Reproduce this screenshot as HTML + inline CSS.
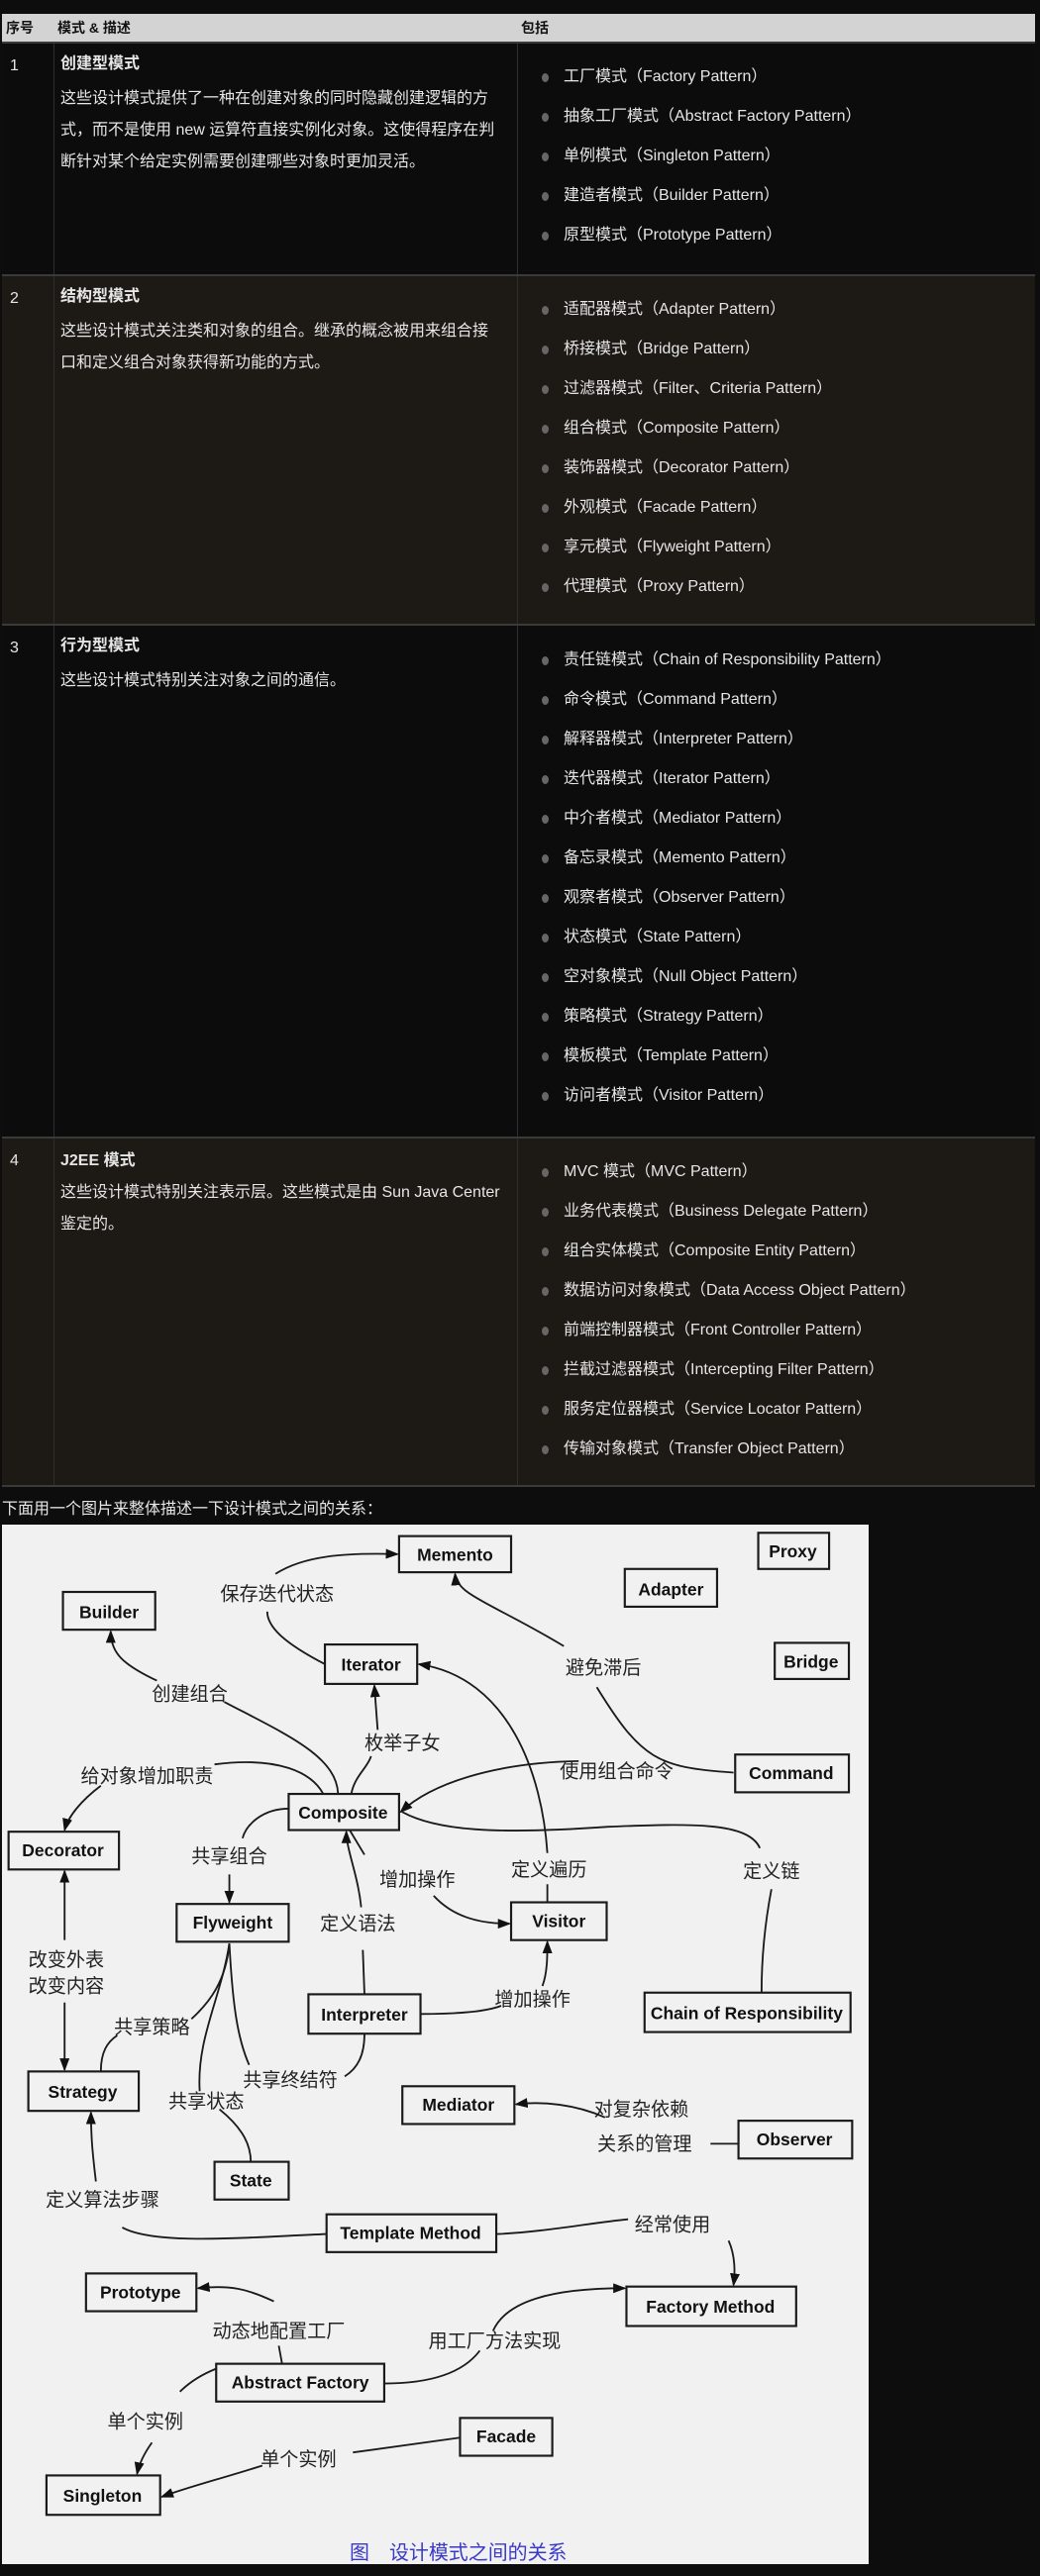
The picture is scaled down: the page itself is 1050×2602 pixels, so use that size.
<!DOCTYPE html>
<html><head><meta charset="utf-8"><style>
*{margin:0;padding:0;box-sizing:border-box}
body{width:1050px;height:2602px;background:#0d0d0d;position:relative;overflow:hidden;font-family:"Liberation Sans","Noto Sans CJK SC",sans-serif;color:#e6e6e6}
.a{position:absolute;white-space:nowrap}
.hdr{position:absolute;left:2px;top:14px;width:1043px;height:28px;background:#d3d3d3}
.h{position:absolute;top:20px;font-size:14px;font-weight:bold;color:#111;line-height:16px}
.row{position:absolute;left:2px;width:1043px;border-top:2px solid #3a3a3a}
.vl{position:absolute;top:0;bottom:0;width:1px;background:#2e2e2e}
.t{font-size:16px;font-weight:bold;line-height:20px}
.d{font-size:16px;line-height:32px}
.li{font-size:16px;line-height:20px}
.b{position:absolute;width:7px;height:9px;border-radius:50%;background:#666}
svg text{font-family:"Liberation Sans","Noto Sans CJK SC",sans-serif}
</style></head><body>
<div class="hdr"></div>
<div class="h a" style="left:6px">序号</div>
<div class="h a" style="left:58px">模式 &amp; 描述</div>
<div class="h a" style="left:526px">包括</div>

<div class="row" style="top:42px;height:235px;background:#0c0c0c"><div class="vl" style="left:52px"></div><div class="vl" style="left:520px"></div></div>
<div class="row" style="top:277px;height:353px;background:#1d1a16"><div class="vl" style="left:52px"></div><div class="vl" style="left:520px"></div></div>
<div class="row" style="top:630px;height:518px;background:#0c0c0c"><div class="vl" style="left:52px"></div><div class="vl" style="left:520px"></div></div>
<div class="row" style="top:1148px;height:354px;background:#1d1a16;border-bottom:2px solid #3a3a3a"><div class="vl" style="left:52px"></div><div class="vl" style="left:520px"></div></div>

<div class="a d" style="left:10px;top:51px">1</div>
<div class="a t" style="left:61px;top:55px">创建型模式</div>
<div class="a d" style="left:61px;top:84px">这些设计模式提供了一种在创建对象的同时隐藏创建逻辑的方<br>式，而不是使用 new 运算符直接实例化对象。这使得程序在判<br>断针对某个给定实例需要创建哪些对象时更加灵活。</div>
<div class="a d" style="left:10px;top:286px">2</div>
<div class="a t" style="left:61px;top:290px">结构型模式</div>
<div class="a d" style="left:61px;top:319px">这些设计模式关注类和对象的组合。继承的概念被用来组合接<br>口和定义组合对象获得新功能的方式。</div>
<div class="a d" style="left:10px;top:639px">3</div>
<div class="a t" style="left:61px;top:643px">行为型模式</div>
<div class="a d" style="left:61px;top:672px">这些设计模式特别关注对象之间的通信。</div>
<div class="a d" style="left:10px;top:1157px">4</div>
<div class="a t" style="left:61px;top:1163px">J2EE 模式</div>
<div class="a d" style="left:61px;top:1189px">这些设计模式特别关注表示层。这些模式是由 Sun Java Center<br>鉴定的。</div>

<div id="items"></div>
<script>
var groups=[[78,["工厂模式（Factory Pattern）","抽象工厂模式（Abstract Factory Pattern）","单例模式（Singleton Pattern）","建造者模式（Builder Pattern）","原型模式（Prototype Pattern）"]],
[313,["适配器模式（Adapter Pattern）","桥接模式（Bridge Pattern）","过滤器模式（Filter、Criteria Pattern）","组合模式（Composite Pattern）","装饰器模式（Decorator Pattern）","外观模式（Facade Pattern）","享元模式（Flyweight Pattern）","代理模式（Proxy Pattern）"]],
[667,["责任链模式（Chain of Responsibility Pattern）","命令模式（Command Pattern）","解释器模式（Interpreter Pattern）","迭代器模式（Iterator Pattern）","中介者模式（Mediator Pattern）","备忘录模式（Memento Pattern）","观察者模式（Observer Pattern）","状态模式（State Pattern）","空对象模式（Null Object Pattern）","策略模式（Strategy Pattern）","模板模式（Template Pattern）","访问者模式（Visitor Pattern）"]],
[1184,["MVC 模式（MVC Pattern）","业务代表模式（Business Delegate Pattern）","组合实体模式（Composite Entity Pattern）","数据访问对象模式（Data Access Object Pattern）","前端控制器模式（Front Controller Pattern）","拦截过滤器模式（Intercepting Filter Pattern）","服务定位器模式（Service Locator Pattern）","传输对象模式（Transfer Object Pattern）"]]];
var h="";groups.forEach(function(g){g[1].forEach(function(s,i){var y=g[0]+40*i;h+='<div class="b" style="left:547px;top:'+(y-4)+'px"></div><div class="a li" style="left:569px;top:'+(y-10)+'px">'+s+'</div>';});});
document.getElementById("items").innerHTML=h;
</script>

<div class="a" style="left:2px;top:1515px;font-size:16px;line-height:20px">下面用一个图片来整体描述一下设计模式之间的关系：</div>

<svg style="position:absolute;left:2px;top:1540px" width="875" height="1050" viewBox="2 927 526 633" preserveAspectRatio="none">
<defs><marker id="ar" markerWidth="8" markerHeight="6" refX="7" refY="3" orient="auto" markerUnits="userSpaceOnUse"><path d="M0,0 L8,3 L0,6 z" fill="#111"/></marker></defs>
<rect x="2" y="927" width="526" height="633" fill="#f1f1f1"/>
<g fill="none" stroke="#1a1a1a" stroke-width="1.3">
<rect x="243" y="934" width="68" height="22"/>
<rect x="461" y="932" width="43" height="22"/>
<rect x="380" y="954" width="56" height="23"/>
<rect x="39" y="968" width="56" height="23"/>
<rect x="471" y="999" width="45" height="22"/>
<rect x="198" y="1000" width="56" height="24"/>
<rect x="447" y="1067" width="69" height="23"/>
<rect x="176" y="1091" width="67" height="22"/>
<rect x="6" y="1114" width="67" height="23"/>
<rect x="108" y="1158" width="68" height="23"/>
<rect x="311" y="1157" width="58" height="23"/>
<rect x="188" y="1213" width="68" height="24"/>
<rect x="392" y="1212" width="125" height="24"/>
<rect x="18" y="1260" width="67" height="24"/>
<rect x="245" y="1269" width="68" height="23"/>
<rect x="449" y="1290" width="69" height="23"/>
<rect x="131" y="1315" width="45" height="23"/>
<rect x="199" y="1347" width="103" height="23"/>
<rect x="53" y="1383" width="67" height="23"/>
<rect x="381" y="1391" width="103" height="24"/>
<rect x="132" y="1438" width="102" height="23"/>
<rect x="280" y="1471" width="56" height="23"/>
<rect x="29" y="1506" width="69" height="24"/>
</g>
<g font-size="10.5" font-weight="bold" text-anchor="middle" fill="#111">
<text x="277" y="949">Memento</text><text x="482" y="947">Proxy</text><text x="408" y="970">Adapter</text>
<text x="67" y="984">Builder</text><text x="493" y="1014">Bridge</text><text x="226" y="1016">Iterator</text>
<text x="481" y="1082">Command</text><text x="209" y="1106">Composite</text><text x="39" y="1129">Decorator</text>
<text x="142" y="1173">Flyweight</text><text x="340" y="1172">Visitor</text><text x="222" y="1229">Interpreter</text>
<text x="454" y="1228">Chain of Responsibility</text><text x="51" y="1276">Strategy</text><text x="279" y="1284">Mediator</text>
<text x="483" y="1305">Observer</text><text x="153" y="1330">State</text><text x="250" y="1362">Template Method</text>
<text x="86" y="1398">Prototype</text><text x="432" y="1407">Factory Method</text><text x="183" y="1453">Abstract Factory</text>
<text x="308" y="1486">Facade</text><text x="63" y="1522">Singleton</text>
</g>
<g font-size="11.5" text-anchor="middle" fill="#222">
<text x="169" y="973">保存迭代状态</text><text x="116" y="1034">创建组合</text><text x="245" y="1064">枚举子女</text>
<text x="367" y="1018">避免滞后</text><text x="90" y="1084">给对象增加职责</text><text x="375" y="1081">使用组合命令</text>
<text x="140" y="1133">共享组合</text><text x="254" y="1147">增加操作</text><text x="334" y="1141">定义遍历</text>
<text x="469" y="1142">定义链</text><text x="218" y="1174">定义语法</text><text x="41" y="1196">改变外表</text>
<text x="41" y="1212">改变内容</text><text x="324" y="1220">增加操作</text><text x="93" y="1237">共享策略</text>
<text x="177" y="1269">共享终结符</text><text x="126" y="1282">共享状态</text><text x="390" y="1287" font-family="Liberation Serif,Noto Serif CJK SC,serif">对复杂依赖</text>
<text x="392" y="1308" font-family="Liberation Serif,Noto Serif CJK SC,serif">关系的管理</text><text x="63" y="1342">定义算法步骤</text><text x="409" y="1357" font-family="Liberation Serif,Noto Serif CJK SC,serif">经常使用</text>
<text x="170" y="1422">动态地配置工厂</text><text x="301" y="1428">用工厂方法实现</text><text x="89" y="1477">单个实例</text>
<text x="182" y="1500">单个实例</text>
</g>
<text x="279" y="1557" font-size="12" text-anchor="middle" fill="#3a3ac8">图　设计模式之间的关系</text>
<g fill="none" stroke="#1a1a1a" stroke-width="1.1">
<path d="M168,957 C185,946 210,944 242,945" marker-end="url(#ar)"/>
<path d="M198,1012 C175,1000 163,990 163,980"/>
<path d="M343,1001 C300,975 278,970 277,957" marker-end="url(#ar)"/>
<path d="M363,1026 C390,1070 400,1075 446,1078"/>
<path d="M96,1022 C75,1012 68,1005 68,992" marker-end="url(#ar)"/>
<path d="M137,1035 C175,1055 205,1068 206,1091"/>
<path d="M214,1091 C216,1080 224,1075 226,1068"/>
<path d="M230,1052 L228,1025" marker-end="url(#ar)"/>
<path d="M333,1157 L333,1146"/>
<path d="M333,1127 C330,1080 310,1020 255,1012" marker-end="url(#ar)"/>
<path d="M352,1071 C300,1072 262,1085 244,1102" marker-end="url(#ar)"/>
<path d="M462,1124 C455,1108 420,1109 370,1111 C300,1116 265,1113 245,1102"/>
<path d="M469,1149 C465,1170 463,1190 463,1212"/>
<path d="M131,1073 C170,1068 190,1078 197,1091"/>
<path d="M62,1086 C50,1095 42,1105 40,1113" marker-end="url(#ar)"/>
<path d="M176,1100 C160,1100 150,1110 148,1118"/>
<path d="M140,1140 L140,1157" marker-end="url(#ar)"/>
<path d="M213,1113 L222,1128"/>
<path d="M264,1153 C275,1165 290,1170 310,1170" marker-end="url(#ar)"/>
<path d="M222,1213 L221,1186"/>
<path d="M220,1160 C218,1140 211,1125 211,1114" marker-end="url(#ar)"/>
<path d="M256,1225 C275,1225 295,1224 305,1220"/>
<path d="M330,1208 C333,1200 333,1190 333,1181" marker-end="url(#ar)"/>
<path d="M40,1180 L40,1138" marker-end="url(#ar)"/>
<path d="M40,1218 L40,1259" marker-end="url(#ar)"/>
<path d="M62,1260 C62,1248 66,1242 72,1238"/>
<path d="M140,1182 C138,1205 128,1218 117,1228"/>
<path d="M140,1182 C135,1215 120,1240 122,1272"/>
<path d="M140,1182 C142,1220 145,1240 152,1256"/>
<path d="M222,1237 C222,1250 218,1258 210,1263"/>
<path d="M134,1283 C145,1292 153,1302 153,1315"/>
<path d="M59,1327 C57,1310 56,1300 56,1285" marker-end="url(#ar)"/>
<path d="M75,1355 C95,1366 150,1361 199,1359"/>
<path d="M302,1359 C330,1358 360,1352 382,1350"/>
<path d="M443,1363 C447,1372 447,1382 446,1390" marker-end="url(#ar)"/>
<path d="M167,1400 C150,1392 140,1390 121,1392" marker-end="url(#ar)"/>
<path d="M170,1427 L172,1438"/>
<path d="M234,1450 C265,1450 283,1442 292,1430"/>
<path d="M300,1418 C308,1400 335,1392 380,1392" marker-end="url(#ar)"/>
<path d="M132,1441 C122,1445 115,1450 110,1455"/>
<path d="M93,1486 C88,1493 85,1500 84,1505" marker-end="url(#ar)"/>
<path d="M280,1483 L215,1492"/>
<path d="M160,1500 C135,1508 115,1513 99,1519" marker-end="url(#ar)"/>
<path d="M368,1288 C350,1280 330,1278 314,1280" marker-end="url(#ar)"/>
<path d="M432,1304 L449,1304"/>
</g>
</svg>
</body></html>
